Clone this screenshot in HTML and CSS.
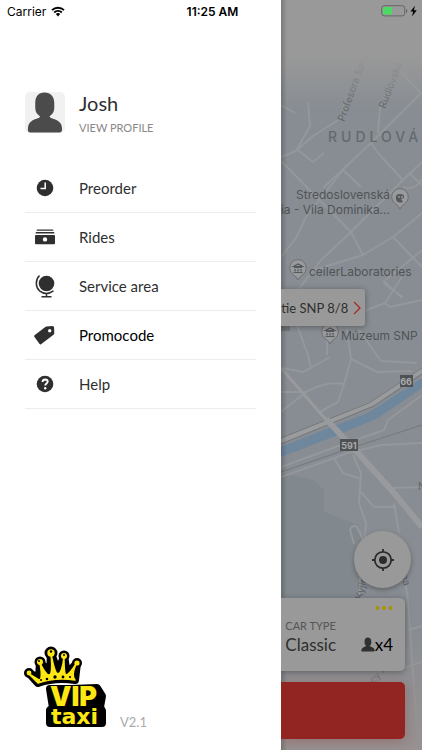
FILE: index.html
```html
<!DOCTYPE html>
<html lang="en">
<head>
    <meta charset="UTF-8">
    <meta name="viewport" content="width=device-width, initial-scale=1.0">
    <title>VIP Taxi</title>
    <link rel="stylesheet" href="styles.css">
</head>
<body>
    <div class="app">
        <header class="status-bar">
            <div class="carrier">
                <span>Carrier</span>
                <svg class="wifi-icon" viewBox="0 0 14 11" aria-hidden="true">
                    <path d="M1 4.2a8.6 8.6 0 0 1 12 0M3.2 6.5a5.4 5.4 0 0 1 7.6 0" fill="none" stroke="#000" stroke-width="1.8"/>
                    <path d="M4.8 8a3.1 3.1 0 0 1 4.4 0L7 10.4z"/>
                </svg>
            </div>
            <time class="clock">11:25 AM</time>
            <svg class="battery-icon" viewBox="0 0 38 12" aria-hidden="true">
                <rect x="1.7" y=".7" width="23" height="10.2" rx="2.5" fill="none" stroke="#666" stroke-width="1"/>
                <rect x="3" y="2" width="9" height="7.6" rx="1" fill="#4cd964"/>
                <path d="M26 4v4q1.4-.5 1.4-2T26 4z" fill="#666"/>
                <path d="M35 .8 30.4 6.6h2.8L32 11.4l4.8-6.2h-2.9z"/>
            </svg>
        </header>

        <aside class="drawer">
            <a class="profile" href="#profile">
                <svg class="avatar" viewBox="0 0 41 41" aria-hidden="true">
                    <path d="M20 0c6 0 10 4 10 10.5v5.5c0 4-2 6.5-5 8.5 1 1.5 3 2 6 3.2 5 2 7 5 7 10.3 0 2-1 3-2.5 3h-30C3.500 41 3 40 3 38c0-5.300 2-8.300 6.500-10.300 3-1.200 5.500-1.700 6-3.200-3-2-5-4.500-5-8.500v-5.500C10.500 4 14 0 20 0z" fill="#4b4b4b"/>
                </svg>
                <span class="profile-text">
                    <span class="profile-name">Josh</span>
                    <span class="profile-link">VIEW PROFILE</span>
                </span>
            </a>

            <nav class="menu">
                <a class="menu-item" href="#preorder">
                    <svg class="menu-icon" viewBox="0 0 24 24" aria-hidden="true">
                        <circle cx="12" cy="12" r="8.3"/>
                        <path d="M12.2 6.5v6H7.5" fill="none" stroke="#fff" stroke-width="1.5"/>
                    </svg>
                    <span>Preorder</span>
                </a>
                <a class="menu-item" href="#rides">
                    <svg class="menu-icon" viewBox="0 0 24 24" aria-hidden="true">
                        <path d="M4 4.5h16l.5 1.3h-17zM3 7h18l.6 1.5H2.4z"/>
                        <path fill-rule="evenodd" d="M3 10h18q1 0 1 1v7.3q0 1-1 1H3q-1 0-1-1V11q0-1 1-1zm9 2.2a2.2 2.2 0 1 0 0 4.4 2.2 2.2 0 0 0 0-4.4z"/>
                    </svg>
                    <span>Rides</span>
                </a>
                <a class="menu-item" href="#service-area">
                    <svg class="menu-icon" viewBox="0 0 24 24" aria-hidden="true">
                        <circle cx="13.5" cy="9.5" r="7.8"/>
                        <path d="M6.5 1.5a10.8 10.8 0 0 0 0 15.3q6.5 5.2 14 0M13.5 19v3.5M8.5 22.7h10" fill="none" stroke="#2f2f2f" stroke-width="1.5"/>
                    </svg>
                    <span>Service area</span>
                </a>
                <a class="menu-item active" href="#promocode">
                    <svg class="menu-icon" viewBox="0 0 24 24" aria-hidden="true">
                        <path fill-rule="evenodd" d="M13.5 3.4 19.5 3q1.5 0 1.6 1.5l.2 5.7q0 .8-.8 1.5L8 21.2q-.8.6-1.4-.2L1.3 13.8q-.6-.9.2-1.5L12.3 4q.6-.5 1.2-.6zm3.2 2.7a1.7 1.7 0 1 0 0 3.4 1.7 1.7 0 0 0 0-3.4z"/>
                    </svg>
                    <span>Promocode</span>
                </a>
                <a class="menu-item" href="#help">
                    <svg class="menu-icon" viewBox="0 0 24 24" aria-hidden="true">
                        <circle cx="12" cy="12" r="8.3"/>
                        <path d="M9.5 10q.2-2.5 2.7-2.5 2.5.1 2.5 2.1c0 1.9-2.5 1.9-2.5 4" fill="none" stroke="#fff" stroke-width="1.9"/>
                        <circle cx="12.2" cy="16.2" r="1.2" fill="#fff"/>
                    </svg>
                    <span>Help</span>
                </a>
            </nav>

            <footer class="brand">
                <svg class="logo" viewBox="0 0 82 84" role="img" aria-label="VIP Taxi">
                    <g stroke="#000" stroke-width="8" stroke-linejoin="round">
                        <path d="M13 37 4 27l10 5 1-16 10 12 1-21 7 20 6-17 3 18 10-11-2 17q-20-3-37 3z"/>
                        <circle cx="4" cy="27" r="1"/>
                        <circle cx="15" cy="16" r="1.5"/>
                        <circle cx="26" cy="7" r="2.5"/>
                        <circle cx="39" cy="10" r="1.5"/>
                        <circle cx="52" cy="17" r="1"/>
                        <path d="M25 43h21l26-1 5 8-2 11 2 4v12H25V64l3-2z"/>
                    </g>
                    <g fill="#ffe713">
                        <path d="M13 37 4 28l10 6q4 0 1-17 6 12 9 12 4 0 2-21 4 20 7 20 4-1 6-17 0 17 2 18 3 0 10-11-5 12-1 16-20-3-37 3z" stroke="#ffe713" stroke-width="1.5" stroke-linejoin="round"/>
                        <circle cx="4" cy="27" r="2.4"/>
                        <circle cx="15" cy="16" r="3"/>
                        <circle cx="26" cy="7" r="3.7"/>
                        <circle cx="39" cy="10" r="3"/>
                        <circle cx="52" cy="17" r="2.6"/>
                    </g>
                    <circle cx="26" cy="5.5" r="1.2"/>
                    <circle cx="14" cy="15" r="1"/>
                    <circle cx="39" cy="9" r="1"/>
                    <circle cx="16" cy="34" r="1"/>
                    <circle cx="22" cy="33" r="1.3"/>
                    <circle cx="30" cy="31" r="1.7"/>
                    <circle cx="38" cy="31" r="1.4"/>
                    <circle cx="45" cy="31" r="1.1"/>
                    <text class="logo-vip" x="25" y="60">VIP</text>
                    <text class="logo-taxi" x="26" y="78">taxi</text>
                </svg>
                <span class="version">V2.1</span>
            </footer>
        </aside>

        <main class="ride">
            <svg class="map" viewBox="281 0 141 750" preserveAspectRatio="xMinYMin slice" role="img" aria-label="Map">
                <defs>
                    <linearGradient id="topFade" x1="0" y1="0" x2="0" y2="1">
                        <stop offset="0" stop-color="#999"/>
                        <stop offset=".5" stop-color="#999"/>
                        <stop offset="1" stop-color="#999" stop-opacity="0"/>
                    </linearGradient>
                    <linearGradient id="bottomFade" x1="0" y1="0" x2="0" y2="1">
                        <stop offset="0" stop-color="#979191" stop-opacity="0"/>
                        <stop offset="1" stop-color="#979191"/>
                    </linearGradient>
                    <linearGradient id="drawerShadow">
                        <stop offset="0" stop-opacity=".2"/>
                        <stop offset="1" stop-opacity="0"/>
                    </linearGradient>
                    <path id="pin" d="M0 11Q-2 7-5 5.5a8.3 8.3 0 1 1 10 0Q2 7 0 11z" fill="#989a9b" stroke="#6e7072"/>
                    <path id="museum" d="M-4.5-2.5 0-5l4.5 2.500zM-4-1.500h8M-3 0v2.500M0 0v2.500M3 0v2.500M-4.500 3.500h9" fill="none" stroke="#55585b" stroke-width="1.2"/>
                </defs>
                <rect x="281" width="141" height="750" fill="#888d93"/>
                <path d="M281 473l20 4 13 3 10 10v22l35 13 5 38-3 34h-80z" fill="#82898e"/>
                <path d="M281 447l50-20 37-14 54-35v10l-44 30-40 17-57 22z" fill="#6e879c"/>

                <g class="road">
                    <path d="M281 157l15-6 17-15 27-17 7-22M296 151l14-25-2-24M298 150l15 12 11-9M281 105l14 8"/>
                    <path d="M281 161l70 71 12 23M281 257l15-19 10-21M323 188l48-45 50-50-22-23M378 133l2-25 13-31M371 143l7 10 25 27 19-18M343 170l18 17M306 217l37-47M321 260l30-28 52-52M409 173l13 12M314 270l49-15 30-18 29-24M393 237l29 30M281 312l40-52M403 187q12 4 19-8"/>
                    <path d="M383 283l20 14M422 250q-40 34-38 30M340 326l27-16 18-7 5 4 32-7M385 303l17-26M384 281l18 17M282 368l21 4 8-4-3-13-18-49M303 372l27-15"/>
                    <path d="M281 412l25-20q20-11 38-8l-6 18-20 11M281 392l25 0M344 384l7-25-4-30M351 359l26 13 35-1M359 330l22 31 36 2M328 320l-1 35"/>
                    <path d="M281 467l60-22 43-15 4-10 34-25M281 477l67-24 33-8 41-2M334 458l9 15 18 6M353 455l8 18-2 30 7 20-1 14M361 492l13 15h20M394 503l5 30M393 488l29-1"/>
                    <path d="M354 544l-4-14q2-6 7-3l6 12M360 560v30q-6 15 4 46M405 580l3 20 4 60 6 80M408 630l14-4M403 668l19-6"/>
                </g>
                <path class="rail" d="M281 441l90-37 51-34"/>
                <path class="track" d="M281 438l88-35 53-35M281 444l93-38 48-32M281 472l70-24 71-23"/>
                <path class="highway-thin" d="M281 368l47 54"/>
                <path class="highway" d="M326 419l32 34 36 40 28 34"/>

                <g class="shield">
                    <rect x="400" y="375" width="13" height="12" fill="#4e5255"/>
                    <text x="406" y="385">66</text>
                    <rect x="340" y="439" width="18" height="12" fill="#4e5255"/>
                    <text x="349" y="449">591</text>
                </g>
                <rect x="281" y="326" width="9" height="5" fill="#74777a"/>

                <g class="street-label">
                    <text transform="translate(344 122) rotate(-70)">Profesora Sara</text>
                    <text transform="translate(385 109) rotate(-69)">Rudlovská</text>
                    <text transform="translate(362 600) rotate(-76)">Kyjinská</text>
                    <text transform="translate(401 575) rotate(75)">na</text>
                    <text transform="translate(374 684) rotate(-48)">cy Pr</text>
                    <text x="418" y="490">N</text>
                </g>
                <text class="district" x="328" y="142">RUDLOVÁ</text>
                <g class="place">
                    <text x="390" y="199" text-anchor="end">Stredoslovenská</text>
                    <text x="390" y="214" text-anchor="end">ria - Vila Dominika...</text>
                    <text x="309" y="276">ceilerLaboratories</text>
                    <text x="341" y="340">Múzeum SNP</text>
                </g>
                <use href="#pin" x="400" y="198"/>
                <path d="M396 199q-1-5 4-5 5 0 4 4l-3 1 2 3q-6 2-7-3z" fill="#55585b"/>
                <circle cx="399" cy="197" r="1" fill="#999"/>
                <circle cx="402" cy="197" r="1" fill="#999"/>
                <use href="#pin" x="298" y="269"/>
                <use href="#museum" x="298" y="269"/>
                <use href="#pin" x="330" y="333"/>
                <use href="#museum" x="330" y="333"/>

                <rect x="281" width="141" height="110" fill="url(#topFade)"/>
                <rect x="281" y="630" width="141" height="120" fill="url(#bottomFade)"/>
                <rect x="281" width="6" height="750" fill="url(#drawerShadow)"/>
            </svg>

            <button class="pickup" type="button">
                <span>tie SNP 8/8</span>
                <svg class="chevron" viewBox="0 0 8 14" aria-hidden="true">
                    <path d="M1 1l6 6-6 6" fill="none" stroke="#a52b2b" stroke-width="1.3"/>
                </svg>
            </button>

            <div class="booking">
                <button class="locate" type="button" aria-label="My location">
                    <svg class="locate-icon" viewBox="0 0 24 24" aria-hidden="true">
                        <circle cx="12" cy="12" r="4" fill="#2c2c2c"/>
                        <circle cx="12" cy="12" r="8.2" fill="none" stroke="#2c2c2c" stroke-width="1.8"/>
                        <path d="M12 1v3M12 20v3M1 12h3M20 12h3" stroke="#2c2c2c" stroke-width="1.8"/>
                    </svg>
                </button>
                <button class="car-card" type="button">
                    <svg class="more" viewBox="0 0 18 4" aria-hidden="true">
                        <circle cx="2.5" cy="2" r="2"/>
                        <circle cx="9" cy="2" r="2"/>
                        <circle cx="15.5" cy="2" r="2"/>
                    </svg>
                    <span class="car-label">CAR TYPE</span>
                    <span class="car-row">
                        <span class="car-name">Classic</span>
                        <span class="seats">
                            <svg class="seat-icon" viewBox="0 0 41 41" aria-hidden="true">
                                <path d="M20 0c6 0 10 4 10 10.5v5.500c0 4-2 6.500-5 8.500 1 1.500 3 2 6 3.200 5 2 9 5 9 10.300 0 2-1 3-2.500 3h-35C1.500 41 1 40 1 38c0-5.300 4-8.300 8.500-10.300 3-1.200 5.500-1.700 6-3.200-3-2-5-4.500-5-8.500v-5.500C10.500 4 14 0 20 0z" fill="#303030"/>
                            </svg>
                            <span>x4</span>
                        </span>
                    </span>
                </button>
                <button class="order-button" type="button" aria-label="Order"></button>
            </div>
        </main>
    </div>
</body>
</html>
```

FILE: styles.css
```css
* {
    margin: 0;
    padding: 0;
    box-sizing: border-box;
}

body {
    font-family: Lato, 'Liberation Sans', sans-serif;
    background: #fff;
    color: #2f2f2f;
}

a {
    color: inherit;
    text-decoration: none;
}

button {
    border: none;
    font-family: inherit;
    color: inherit;
    cursor: pointer;
}

.app {
    position: relative;
    display: grid;
    grid-template-columns: 2fr 1fr;
    min-height: 100vh;
}

/* Status bar, drawn over both the drawer and the map */
.status-bar {
    position: absolute;
    top: 0;
    left: 0;
    right: 0;
    z-index: 2;
    display: grid;
    grid-template-columns: 1fr auto 1fr;
    align-items: center;
    height: 22px;
    padding: 0 4px 0 7px;
    font-family: Inter, 'Liberation Sans', sans-serif;
    font-size: 12px;
    color: #000;
}

.carrier {
    display: flex;
    align-items: center;
    gap: 5px;
}

.wifi-icon {
    width: 14px;
    height: 11px;
}

.clock {
    font-weight: 600;
}

.battery-icon {
    width: 38px;
    height: 12px;
    justify-self: end;
}

/* Drawer */
.drawer {
    display: flex;
    flex-direction: column;
    padding: 92px 25px 20px;
    background: #fff;
}

.profile {
    display: flex;
    gap: 14px;
    margin-bottom: 28px;
}

.avatar {
    width: 40px;
    height: 41px;
    border-radius: 5px;
    background: #f1f1f1;
}

.profile-text {
    display: flex;
    flex-direction: column;
    gap: 6px;
}

.profile-name {
    font-size: 20px;
    line-height: 22px;
}

.profile-link {
    font-size: 11px;
    line-height: 16px;
    color: #888;
}

.menu-item {
    display: flex;
    align-items: center;
    gap: 14px;
    height: 49px;
    border-bottom: 1px solid #ececec;
    font-size: 15px;
}

.menu-item.active {
    color: #000;
}

.menu-icon {
    width: 40px;
    height: 24px;
    fill: #2f2f2f;
}

.brand {
    display: flex;
    align-items: flex-end;
    gap: 13px;
    margin-top: auto;
}

.logo {
    width: 82px;
    height: 84px;
    overflow: visible;
}

.logo text {
    font-weight: 900;
    fill: #ffe713;
}

.logo-vip {
    font-family: Inter, 'Liberation Sans', sans-serif;
    font-size: 27px;
}

.logo-taxi {
    font-family: 'DejaVu Sans', sans-serif;
    font-size: 22px;
}

.version {
    font-size: 13px;
    color: #aaa;
}

/* Map side, dimmed while the drawer is open */
.ride {
    position: relative;
    display: flex;
    flex-direction: column;
    overflow: hidden;
    background: #888d93;
}

.map {
    position: absolute;
    inset: 0;
    width: 100%;
    height: 100%;
}

.road {
    fill: none;
    stroke: #94979b;
    stroke-width: 2;
    stroke-linejoin: round;
}

.rail {
    fill: none;
    stroke: #999b9d;
    stroke-width: 5;
}

.track {
    fill: none;
    stroke: #74787c;
    stroke-width: 1;
}

.highway,
.highway-thin {
    fill: none;
    stroke: #999a9d;
}

.highway {
    stroke-width: 6;
}

.highway-thin {
    stroke-width: 3;
}

.shield text {
    font: 700 9px Inter, 'Liberation Sans', sans-serif;
    text-anchor: middle;
    fill: #aaa;
}

.street-label text {
    font: 10px Inter, 'Liberation Sans', sans-serif;
    fill: #606468;
}

.district {
    font: 500 14px Inter, 'Liberation Sans', sans-serif;
    letter-spacing: 4px;
    fill: #65696d;
}

.place text {
    font: 12px Inter, 'Liberation Sans', sans-serif;
    fill: #505457;
}

.pickup {
    position: absolute;
    top: 289px;
    left: 0;
    display: flex;
    align-items: center;
    gap: 5px;
    height: 37px;
    padding-right: 4px;
    border-radius: 0 3px 3px 0;
    background: #999;
    box-shadow: 0 1px 6px rgba(0, 0, 0, 0.35);
    font-size: 13px;
}

.chevron {
    width: 8px;
    height: 14px;
}

.booking {
    position: relative;
    display: flex;
    flex-direction: column;
    margin-top: auto;
    padding: 0 17px 11px 0;
}

.locate {
    align-self: flex-end;
    width: 57px;
    height: 57px;
    margin: 0 -6px 10px 0;
    border-radius: 50%;
    background: #999;
    box-shadow: 0 2px 5px rgba(0, 0, 0, 0.3);
}

.locate-icon {
    display: block;
    width: 24px;
    height: 24px;
    margin: auto;
}

.car-card {
    display: flex;
    flex-direction: column;
    height: 73px;
    margin-bottom: 11px;
    padding: 8px 12px 0 4px;
    border-radius: 0 5px 5px 0;
    background: #999;
    box-shadow: 0 1px 6px rgba(0, 0, 0, 0.35);
    text-align: left;
}

.more {
    align-self: flex-end;
    width: 18px;
    height: 4px;
    fill: #a99300;
}

.car-label {
    margin-top: 9px;
    font-size: 11px;
    line-height: 14px;
    color: #555;
}

.car-row {
    display: flex;
    align-self: stretch;
    justify-content: space-between;
    align-items: center;
    font-size: 17px;
    line-height: 23px;
}

.seats {
    display: flex;
    align-items: center;
    color: #000;
}

.seat-icon {
    width: 14px;
    height: 15px;
}

.order-button {
    height: 57px;
    border-radius: 0 5px 5px 0;
    background: #922521;
    box-shadow: 0 2px 12px rgba(146, 37, 33, 0.3);
}
```
